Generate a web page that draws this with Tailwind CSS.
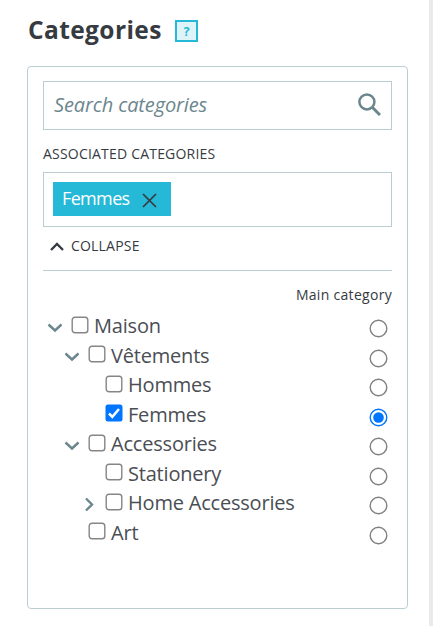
<!DOCTYPE html>
<html lang="en">
<head>
  <meta charset="UTF-8" />
  <meta name="viewport" content="width=device-width, initial-scale=1.0"/>
  <title>Categories</title>
  <script src="https://cdn.jsdelivr.net/npm/@tailwindcss/browser@4"></script>
  <style>
    body {
      font-family: 'Open Sans', sans-serif;
    }
  </style>
</head>
<body class="h-[632px] overflow-hidden bg-white text-[#363a41]">

<div class="flex h-[626px] w-[433px] border-r-4 border-[#e8eaec]">
  <main class="w-[429px] pl-[27px] pr-[21px]">
    <header class="flex h-[66px] items-start gap-[15px] pt-[13px]">
      <h1 class="w-[133px] pl-px text-[24.5px] leading-[33px] font-bold tracking-[0.4px] whitespace-nowrap">Categories</h1>
      <span class="mt-[7px] flex h-[22px] w-[23px] items-center justify-center border-2 border-[#25b9d7] bg-[#def4f9] font-['DejaVu_Sans_Mono'] text-[13px] leading-none font-bold text-[#25b9d7]">?</span>
    </header>

    <section class="h-[543px] w-[381px] rounded border border-[#bbcdd2] px-[15px] pt-3.5">
      <!-- Search -->
      <div class="flex h-[49px] items-center justify-between border border-[#bbcdd2] pr-2.5 pl-2.5">
        <span class="pb-0.5 text-[20px] leading-[27px] tracking-[-0.12px] text-[#6c868e] italic">Search categories</span>
        <svg class="mb-[3px] h-[23px] w-[23px]" viewBox="0 0 23 23" fill="none" stroke="#6c868e" stroke-width="2.5">
          <circle cx="8.9" cy="8.9" r="7.5" />
          <path d="M14.5 14.5L22 22" stroke-width="3" />
        </svg>
      </div>

      <h2 class="mt-[14px] h-[20px] text-[14px] leading-[20px] tracking-[0.2px]">ASSOCIATED CATEGORIES</h2>
      <div class="mt-[8px] h-[55px] border border-[#bbcdd2] p-[9px]">
        <span class="flex h-[34px] w-[118px] items-center bg-[#25b9d7] pl-[9px] text-[18px] text-white">
          <span class="w-[80px] pb-0.5 tracking-[-0.65px]">Femmes</span>
          <svg class="mt-[3px] h-[15px] w-[15px]" viewBox="0 0 15 15" fill="none" stroke="#363a41" stroke-width="1.7">
            <path d="M1 1L14 14M14 1L1 14" />
          </svg>
        </span>
      </div>
      <div class="flex h-[44px] items-start border-b border-[#bbcdd2] pt-[9px] pl-[7px]">
        <svg class="mt-1.5 mr-[7px] h-[9px] w-[14px]" viewBox="0 0 14 9" fill="none" stroke="#363a41" stroke-width="2.3">
          <path d="M1 8L7 2L13 8" />
        </svg>
        <span class="text-[14px] leading-[20px] tracking-[0.2px]">COLLAPSE</span>
      </div>

      <p class="mt-[14px] h-[20px] text-right text-[14px] leading-[20px] tracking-[0.3px]">Main category</p>

      <!-- Category tree -->
      <ul id="tree" class="mt-[5px] text-[20px] tracking-[-0.2px] text-[#4a4e54]"></ul>
    </section>
  </main>
</div>

  <script>
    const categories = [
      { name: 'Maison', indent: 4, arrow: 'down' },
      { name: 'Vêtements', indent: 21, arrow: 'down' },
      { name: 'Hommes', indent: 38 },
      { name: 'Femmes', indent: 38, checked: true },
      { name: 'Accessories', indent: 21, arrow: 'down' },
      { name: 'Stationery', indent: 38 },
      { name: 'Home Accessories', indent: 38, arrow: 'right' },
      { name: 'Art', indent: 21 }
    ];
    const arrows = { down: 'M1.5 4.5L8 10.5L14.5 4.5', right: 'M5 1.5L11 7.5L5 13.5' };

    document.getElementById('tree').innerHTML = categories.map((c) => `
      <li class="flex h-[29.5px] items-center" style="padding-left: ${c.indent}px">
        <svg class="mt-[5px] mr-[8.5px] h-[15px] w-[15px]" viewBox="0 0 15 15" fill="none" stroke="#6c868e" stroke-width="2.4">
          ${c.arrow ? `<path d="${arrows[c.arrow]}" />` : ''}
        </svg>
        <svg class="mr-[5.5px] h-[18px] w-[18px]" viewBox="0 0 18 18" fill="none">
          ${c.checked
            ? '<rect x="0.5" y="0.5" width="17" height="17" rx="2.5" fill="#0075ff" /><path d="M4 9.5L7.3 12.8L14 5" stroke="#fff" stroke-width="2.5" />'
            : '<rect x="1.2" y="1.2" width="15.6" height="15.6" rx="2.8" stroke="#858585" stroke-width="1.4" />'}
        </svg>
        <span class="pt-[3px] leading-[26px] whitespace-nowrap">${c.name}</span>
        <svg class="mt-[7.5px] mr-1 ml-auto h-[19px] w-[19px]" viewBox="0 0 19 19" fill="none">
          <circle cx="9.5" cy="9.5" r="8.3" stroke="${c.checked ? '#0075ff' : '#808080'}" stroke-width="1.4" />
          ${c.checked ? '<circle cx="9.5" cy="9.5" r="5.3" fill="#0075ff" />' : ''}
        </svg>
      </li>`).join('');
  </script>

</body>
</html>
